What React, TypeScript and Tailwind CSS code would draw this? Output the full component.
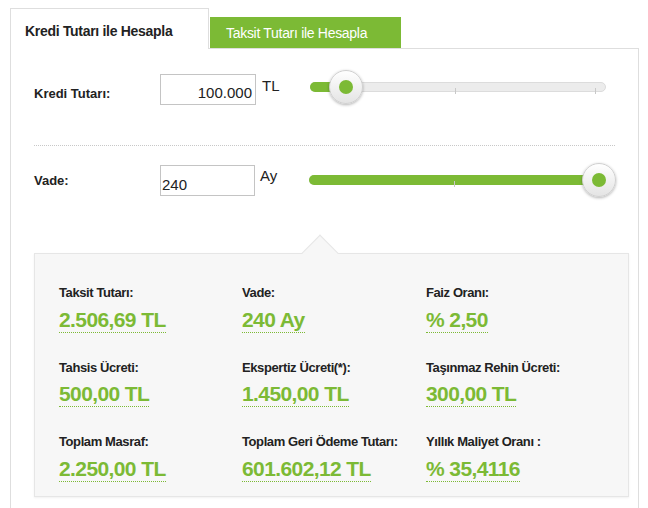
const font = { fontFamily: '"Liberation Sans", Arial, sans-serif' };

function Slider({ pct }: { pct: number }) {
  return (
    <div className="relative h-[34px] w-[296px]">
      <div className="absolute left-0 right-0 top-[12px] h-[10px] rounded-full border border-[#dcdcdc] bg-[#ececec]" />
      <div className="absolute left-0 top-[12px] h-[10px] rounded-full bg-[#7cba35]" style={{ width: `${pct}%` }} />
      <div className="absolute left-[145px] top-[18px] h-[6px] w-px bg-[#c8c8c8]" />
      <div className="absolute left-[285px] top-[18px] h-[6px] w-px bg-[#c8c8c8]" />
      <div
        className="absolute top-0 flex h-[34px] w-[34px] -translate-x-1/2 items-center justify-center rounded-full border border-[#d0d0d0] bg-gradient-to-b from-white to-[#e4e4e4] shadow-[0_1px_3px_rgba(0,0,0,0.3)]"
        style={{ left: `${pct}%` }}
      >
        <div className="h-[14px] w-[14px] rounded-full bg-[#7cba35]" />
      </div>
    </div>
  );
}

const items = [
  ["Taksit Tutarı:", "2.506,69 TL"],
  ["Vade:", "240 Ay"],
  ["Faiz Oranı:", "% 2,50"],
  ["Tahsis Ücreti:", "500,00 TL"],
  ["Ekspertiz Ücreti(*):", "1.450,00 TL"],
  ["Taşınmaz Rehin Ücreti:", "300,00 TL"],
  ["Toplam Masraf:", "2.250,00 TL"],
  ["Toplam Geri Ödeme Tutarı:", "601.602,12 TL"],
  ["Yıllık Maliyet Oranı :", "% 35,4116"],
];

export default function App() {
  return (
    <div className="h-[508px] w-[648px] bg-white pl-[10px] pt-[8px] text-[#222]" style={font}>
      <div className="flex items-end">
        <div className="relative z-10 -mb-px flex h-[41px] w-[199px] items-start border border-b-0 border-[#dedede] bg-white pl-[14px] pt-[12px] text-[14px] font-bold tracking-[-0.3px]">
          Kredi Tutarı ile Hesapla
        </div>
        <div className="ml-px flex h-[31px] w-[191px] items-center bg-[#7cba35] pl-[16px] pt-[2px] text-[14px] tracking-[-0.3px] text-white">
          Taksit Tutarı ile Hesapla
        </div>
      </div>
      <div className="h-[470px] w-[629px] border border-[#dedede] px-[23px] pt-[25px]">
        <div className="flex items-start">
          <div className="w-[126px] pt-[10px] text-[13px] font-bold">Kredi Tutarı:</div>
          <div className="h-[31px] w-[96px] border border-[#c4c4c4] pr-[3px] pt-[7px] text-right text-[15px]">100.000</div>
          <div className="ml-[6px] w-[48px] pt-[1px] text-[15px]">TL</div>
          <div className="-mt-[4px]"><Slider pct={12} /></div>
        </div>
        <div className="mt-[40px] border-t border-dotted border-[#c8c8c8]" />
        <div className="mt-[19px] flex items-start">
          <div className="w-[126px] pt-[6px] text-[13px] font-bold">Vade:</div>
          <div className="h-[31px] w-[95px] border border-[#c4c4c4] pl-[1px] pt-[8px] text-[15px]">240</div>
          <div className="ml-[5px] w-[49px] text-[15px]">Ay</div>
          <div className="mt-[-2px]"><Slider pct={98} /></div>
        </div>
        <div className="relative mt-[56px] h-[244px] w-[595px] border border-[#e6e6e6] bg-[#f7f7f7] px-[24px] pt-[29px] shadow-[0_1px_2px_rgba(0,0,0,0.06)]">
          <div className="absolute left-[272px] top-[-14px] h-[26px] w-[26px] rotate-45 border-l border-t border-[#e6e6e6] bg-[#f7f7f7]" />
          <div className="relative grid grid-cols-[183px_184px_1fr] gap-y-[24px]">
            {items.map(([l, v]) => (
              <div key={l}>
                <div className="text-[13px] font-bold tracking-[-0.4px] text-[#222]">{l}</div>
                <div className="mt-[4px] inline-block border-b border-dotted border-[#7cba35] text-[21px] font-bold leading-[25px] tracking-[-0.6px] text-[#7cba35]">{v}</div>
              </div>
            ))}
          </div>
        </div>
      </div>
    </div>
  );
}
